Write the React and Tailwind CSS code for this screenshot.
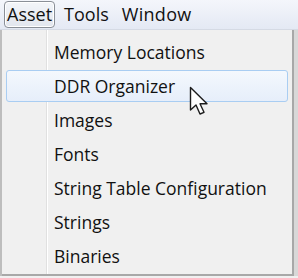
const items = [
  "Memory Locations",
  "DDR Organizer",
  "Images",
  "Fonts",
  "String Table Configuration",
  "Strings",
  "Binaries",
];

function Cursor() {
  return (
    <svg width="22" height="32" viewBox="0 0 22 32" className="absolute left-[189px] top-[86px]">
      <path
        d="M1.5 1.5 L1.5 24 L7 19 L11 28 L15 26.3 L11 17.8 L18 17.8 Z"
        fill="#ffffff"
        stroke="#1c1c1c"
        strokeWidth="1.4"
        strokeLinejoin="round"
      />
    </svg>
  );
}

export default function App() {
  return (
    <div className="relative w-[298px] h-[278px] overflow-hidden bg-[#f0f0f0] text-[#111] font-['Open_Sans','Noto_Sans',sans-serif]">
      <div className="flex h-[30px] items-center gap-[5px] px-[4px] bg-gradient-to-b from-[#f4f6fb] to-[#e4e9f4] border-b border-[#d5dae4] text-[18px]">
        <div className="flex h-[27px] items-center rounded-[4px] border border-[#8a8f97] bg-gradient-to-b from-[#f3f5f9] to-[#e2e6ee] px-[2px] shadow-[inset_0_0_0_1px_#fff]">
          Asset
        </div>
        <div className="px-[4px]">Tools</div>
        <div className="px-[4px] tracking-[0.3px]">Window</div>
      </div>
      <div className="flex">
        <div className="w-[2px] bg-[#bdbdbd]" />
        <div className="relative w-[292px] h-[246px] border-r-[2px] border-b-[2px] border-[#a8a8a8] bg-[#f0f0f0] pt-[5px]">
          <div className="absolute left-[44px] top-0 bottom-0 w-[1px] bg-[#e0e0e0]" />
          <div className="absolute left-[45px] top-0 bottom-0 w-[1px] bg-[#ffffff]" />
          <div className="flex flex-col">
            {items.map((label, i) => (
              <div key={label} className="h-[34px] px-[4px] py-[1px]">
                <div
                  className={
                    i === 1
                      ? "relative flex h-full items-center rounded-[3px] border border-[#a9cdf2] bg-gradient-to-b from-[#f4f8fd] to-[#e6eefa] pl-[47px] text-[17.5px]"
                      : "relative flex h-full items-center border border-transparent pl-[47px] text-[17.5px]"
                  }
                >
                  {label}
                </div>
              </div>
            ))}
          </div>
        </div>
        <div className="w-[4px] bg-[#d8d8d8]" />
      </div>
      <Cursor />
    </div>
  );
}
